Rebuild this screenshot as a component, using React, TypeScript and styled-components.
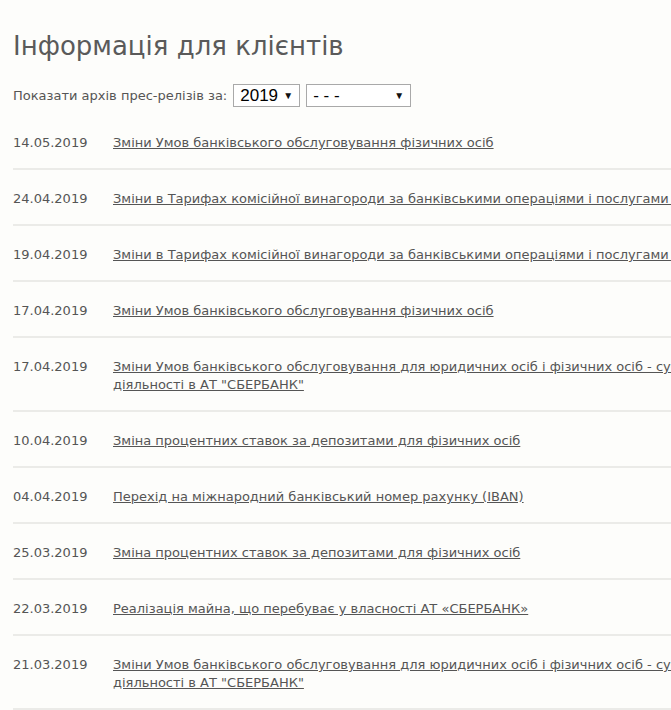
import { createGlobalStyle } from 'styled-components';
import styled from 'styled-components';

type Release = {
  date: string;
  title: string;
};

const releases: Release[] = [
  { date: '14.05.2019', title: 'Зміни Умов банківського обслуговування фізичних осіб' },
  {
    date: '24.04.2019',
    title: 'Зміни в Тарифах комісійної винагороди за банківськими операціями і послугами АТ "СБЕРБАНК"',
  },
  {
    date: '19.04.2019',
    title: 'Зміни в Тарифах комісійної винагороди за банківськими операціями і послугами АТ "СБЕРБАНК"',
  },
  { date: '17.04.2019', title: 'Зміни Умов банківського обслуговування фізичних осіб' },
  {
    date: '17.04.2019',
    title:
      'Зміни Умов банківського обслуговування для юридичних осіб і фізичних осіб - суб\'єктів господарської діяльності в АТ "СБЕРБАНК"',
  },
  { date: '10.04.2019', title: 'Зміна процентних ставок за депозитами для фізичних осіб' },
  { date: '04.04.2019', title: 'Перехід на міжнародний банківський номер рахунку (IBAN)' },
  { date: '25.03.2019', title: 'Зміна процентних ставок за депозитами для фізичних осіб' },
  { date: '22.03.2019', title: 'Реалізація майна, що перебуває у власності АТ «СБЕРБАНК»' },
  {
    date: '21.03.2019',
    title:
      'Зміни Умов банківського обслуговування для юридичних осіб і фізичних осіб - суб\'єктів господарської діяльності в АТ "СБЕРБАНК"',
  },
];

export default function App() {
  return (
    <>
      <GlobalStyle />
      <Page>
        <Title>Інформація для клієнтів</Title>
        <Filter>
          <FilterLabel>Показати архів прес-релізів за:</FilterLabel>
          <SelectBox $width={67}>
            <span>2019</span>
            <Arrow>▼</Arrow>
          </SelectBox>
          <SelectBox $width={105}>
            <span>- - -</span>
            <Arrow>▼</Arrow>
          </SelectBox>
        </Filter>
        <List>
          {releases.map((item, index) => (
            <Row key={index}>
              <DateCell>{item.date}</DateCell>
              <TitleLink href='#'>{item.title}</TitleLink>
            </Row>
          ))}
        </List>
      </Page>
    </>
  );
}

const GlobalStyle = createGlobalStyle`
  html, body {
    margin: 0;
    padding: 0;
    overflow: hidden;
    background: #fdfdfb;
  }
`;

const Page = styled.div`
  width: 860px;
  padding: 30px 0 0 13px;
  font-family: 'DejaVu Sans', Verdana, sans-serif;
  color: #555;
`;

const Title = styled.h1`
  margin: 0;
  font-size: 26px;
  line-height: 32px;
  font-weight: normal;
  color: #5a5a5a;
`;

const Filter = styled.div`
  display: flex;
  align-items: center;
  margin-top: 22px;
  height: 23px;
`;

const FilterLabel = styled.span`
  font-size: 13px;
  color: #555;
  margin-right: 6px;
`;

const SelectBox = styled.div<{ $width: number }>`
  display: flex;
  align-items: center;
  justify-content: space-between;
  box-sizing: border-box;
  width: ${({ $width }) => $width}px;
  height: 23px;
  margin-right: 6px;
  padding: 0 6px 0 6px;
  border: 1px solid #a9a9a9;
  background: #fff;
  font-family: 'Liberation Sans', Arial, sans-serif;
  font-size: 17px;
  color: #000;
`;

const Arrow = styled.span`
  font-size: 10px;
  color: #111;
`;

const List = styled.div`
  margin-top: 7px;
`;

const Row = styled.div`
  display: flex;
  padding: 20px 0 16px;
  border-bottom: 2px solid #ebebe8;
  font-size: 13px;
  line-height: 18px;
`;

const DateCell = styled.div`
  flex: 0 0 100px;
  color: #555;
`;

const TitleLink = styled.a`
  flex: 1;
  color: #555;
  text-decoration: underline;
`;
